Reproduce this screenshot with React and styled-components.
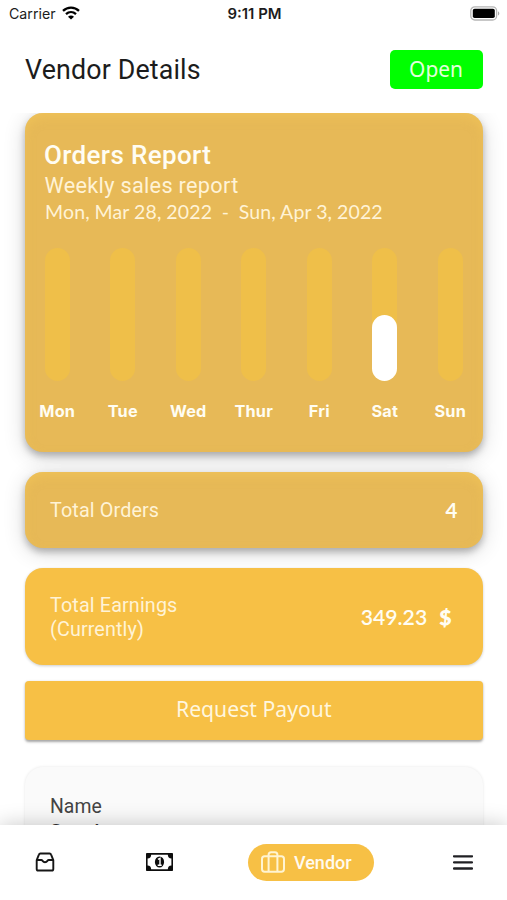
import React from 'react';
import styled, { createGlobalStyle } from 'styled-components';

const GlobalStyle = createGlobalStyle`
  * { box-sizing: border-box; }
  body { margin: 0; background: #fff; }
`;

const Screen = styled.div`
  width: 507px;
  height: 900px;
  display: flex;
  flex-direction: column;
  overflow: hidden;
  background: #fff;
  font-family: Roboto, sans-serif;
`;

const StatusBar = styled.div`
  flex: none;
  height: 28px;
  padding: 0 7px 0 9px;
  display: grid;
  grid-template-columns: 1fr auto 1fr;
  align-items: center;
  font-family: Inter, sans-serif;
  color: #1c1c1c;
`;

const Carrier = styled.div`
  display: flex;
  align-items: center;
  gap: 6px;
  font-size: 14.2px;
  line-height: 18px;

  svg { margin-top: -2px; }
`;

const Clock = styled.div`
  font-size: 14.9px;
  font-weight: 600;
`;

const Battery = styled.div`
  display: flex;
  justify-content: flex-end;
  svg { display: block; margin-top: -1px; }
`;

const Header = styled.header`
  flex: none;
  height: 85px;
  padding: 22px 24.5px 24.5px 25px;
  display: flex;
  justify-content: space-between;
  align-items: center;
`;

const Title = styled.h1`
  margin: 2px 0 0;
  font-size: 26.8px;
  line-height: 34px;
  font-weight: 400;
  letter-spacing: 0.15px;
  color: #1c1c1c;
`;

const OpenButton = styled.button`
  width: 93px;
  height: 39px;
  padding: 0 0 1px;
  border: 0;
  border-radius: 5px;
  background: #00ff00;
  color: #e2ffdc;
  font: 400 20.9px 'Noto Sans', sans-serif;
`;

const Content = styled.main`
  flex: 1;
  min-height: 0;
  overflow: hidden;
  padding: 0 24.5px 0 25px;
  display: flex;
  flex-direction: column;
`;

const Card = styled.section`
  flex: none;
  border-radius: 18px;
  color: #fff3d6;
  background: ${(p) => (p.$raised ? '#e7b957' : '#f7c045')};
  box-shadow: ${(p) =>
    p.$raised
      ? 'inset 0 5px 12px -2px rgba(250, 205, 90, 0.5), 0 4px 7px rgba(0, 0, 0, 0.25), 0 4px 22px rgba(0, 0, 0, 0.16)'
      : '0 1px 3px rgba(0, 0, 0, 0.2)'};
`;

const ReportCard = styled(Card)`
  height: 339px;
  padding-top: 27px;
`;

const ReportHeading = styled.h2`
  margin: 0 0 0 19px;
  height: 31px;
  font-size: 26px;
  line-height: 31px;
  font-weight: 500;
  letter-spacing: 0.35px;
  color: #fffdf3;
`;

const ReportSubtitle = styled.p`
  margin: 0 0 0 19.5px;
  font-size: 21.7px;
  line-height: 30px;
  font-weight: 400;
  letter-spacing: 0.3px;
`;

const ReportRange = styled.p`
  margin: -1px 0 0 20px;
  font: 400 19.5px/24px Lato, sans-serif;
  letter-spacing: 0.14px;
  word-spacing: -0.3px;
  white-space: pre;
`;

const Chart = styled.div`
  display: flex;
  margin: 24px -0.5px 0 -0.5px;
`;

const Day = styled.div`
  flex: 1;
  display: flex;
  flex-direction: column;
  align-items: center;
`;

const Track = styled.div`
  width: 25px;
  height: 133px;
  border-radius: 12.5px;
  background: #efbf49;
  display: flex;
  align-items: flex-end;
`;

const Fill = styled.div`
  width: 100%;
  height: ${(p) => p.$level}%;
  border-radius: 12.5px;
  background: #fff;
`;

const DayLabel = styled.span`
  margin-top: 18px;
  font: 700 16.3px/24px Inter, sans-serif;
  letter-spacing: 0.2px;
  color: #fffdf3;
`;

const StatCard = styled(Card)`
  height: ${(p) => p.$height}px;
  margin-top: 19.5px;
  padding: 1px ${(p) => p.$end}px 0 25px;
  display: flex;
  justify-content: space-between;
  align-items: center;
`;

const StatLabel = styled.div`
  margin-top: 2px;
  font-size: 19.8px;
  line-height: 24px;
  letter-spacing: 0.12px;
`;

const StatValue = styled.div`
  font: 700 ${(p) => p.$size}px/26px Lato, sans-serif;
  display: flex;
  gap: 12px;
  color: #fffdf3;
`;

const Amount = styled.span`
  font-weight: 600;
`;

const Currency = styled.span`
  font-weight: 800;
`;

const PayoutButton = styled.button`
  flex: none;
  height: 59px;
  margin-top: 15.5px;
  padding: 0 0 3px;
  border: 0;
  border-radius: 4px;
  background: #f7c045;
  box-shadow: 0 1.5px 2.5px rgba(0, 0, 0, 0.35);
  color: #fff6de;
  font: 400 21.2px 'Noto Sans', sans-serif;
`;

const DetailsCard = styled.section`
  flex: none;
  height: 120px;
  margin-top: 27px;
  padding: 28px 25px;
  border-radius: 18px;
  background: #fafafa;
  box-shadow: 0 0 3px rgba(0, 0, 0, 0.1);
`;

const FieldName = styled.div`
  font: 400 19.4px/24px Roboto, sans-serif;
  color: #444;
`;

const FieldValue = styled.div`
  margin-top: 2px;
  font: 500 19.6px/24px Roboto, sans-serif;
  letter-spacing: 1.6px;
  color: #333;
`;

const NavBar = styled.nav`
  flex: none;
  position: relative;
  height: 75.5px;
  padding: 0 34px 0 35px;
  display: grid;
  grid-template-columns: 111px 102px 126px 1fr;
  align-items: center;
  background: #fff;
  box-shadow: 0 0 20px rgba(0, 0, 0, 0.22);
  svg { display: block; }
`;

const NavItem = styled.div`
  display: flex;
  justify-content: ${(p) => (p.$end ? 'flex-end' : 'flex-start')};
`;

const ActiveNavItem = styled.div`
  height: 37px;
  border-radius: 18.5px;
  padding-left: 13px;
  display: flex;
  align-items: center;
  gap: 9px;
  background: #f7c045;
  color: #fffaf0;
  font: 500 18px Roboto, sans-serif;
`;

const WifiIcon = () => (
  <svg width="18" height="14" viewBox="0 0 18 14" fill="none" stroke="#000" strokeWidth="2.3">
    <path d="M1 4.9C5.5.6 12.5.6 17 4.9" />
    <path d="M4 8.1c2.9-2.7 7.1-2.7 10 0" />
    <path d="M9 13.6 6 10.7c1.7-1.5 4.3-1.5 6 0z" fill="#000" stroke="none" />
  </svg>
);

const BatteryIcon = () => (
  <svg width="30" height="15" viewBox="0 0 30 15">
    <rect x=".8" y=".8" width="25.8" height="13.2" rx="4" fill="#fff" stroke="#b5b5b5" strokeWidth="1.3" />
    <rect x="2.8" y="2.7" width="22" height="9.4" rx="1.8" fill="#000" />
    <path d="M28 5.2c1.8.7 1.8 3.7 0 4.4z" fill="#aaa" />
  </svg>
);

const TrayIcon = () => (
  <svg width="20" height="20" viewBox="0 0 20 20" fill="none" stroke="#161616" strokeWidth="1.9" strokeLinejoin="round" strokeLinecap="round">
    <path d="M1.7 8.2 3.9 2.6Q4.3 1.5 5.4 1.5h9.2q1.1 0 1.5 1.1l2.2 5.6v8.7q0 1.6-1.6 1.6H3.3q-1.6 0-1.6-1.6z" />
    <path d="M1.9 8h4.4c.8 0 .9.3 1.3.9 1.2 1.8 3.6 1.8 4.8 0 .4-.6.5-.9 1.3-.9h4.4" />
  </svg>
);

const CashIcon = () => (
  <svg width="27" height="18" viewBox="0 0 27 18">
    <rect width="27" height="18" rx=".8" fill="#0d0d0d" />
    <path d="M5.2 1.7h16.6a3.8 3.8 0 0 0 3.6 3.7v7.2a3.8 3.8 0 0 0-3.6 3.7H5.2a3.8 3.8 0 0 0-3.6-3.7V5.4a3.8 3.8 0 0 0 3.6-3.7z" fill="#fff" />
    <ellipse cx="13.5" cy="9" rx="4.6" ry="5.5" fill="#0d0d0d" />
    <path d="M11.9 6.4 14 5.3v7M11.7 12.3h4" fill="none" stroke="#fff" strokeWidth="1.4" />
  </svg>
);

const SuitcaseIcon = () => (
  <svg width="24" height="22" viewBox="0 0 24 22" fill="none" stroke="#fff4d2" strokeWidth="2" strokeLinejoin="round">
    <rect x="1" y="5.3" width="22" height="15.4" rx="2.6" />
    <path d="M7.6 20.5V3.8q0-2.5 2.5-2.5h3.8q2.5 0 2.5 2.5v16.7" />
  </svg>
);

const MenuIcon = () => (
  <svg width="20" height="16" viewBox="0 0 20 16" stroke="#202024" strokeWidth="2.3" strokeLinecap="round">
    <path d="M1 2.3h18M1 8.4h18M1 14.5h18" />
  </svg>
);

const days = [
  ['Mon', 0],
  ['Tue', 0],
  ['Wed', 0],
  ['Thur', 0],
  ['Fri', 0],
  ['Sat', 50],
  ['Sun', 0],
];

export default function App() {
  return (
    <Screen>
      <GlobalStyle />
      <StatusBar>
        <Carrier>Carrier <WifiIcon /></Carrier>
        <Clock>9:11 PM</Clock>
        <Battery><BatteryIcon /></Battery>
      </StatusBar>
      <Header>
        <Title>Vendor Details</Title>
        <OpenButton>Open</OpenButton>
      </Header>
      <Content>
        <ReportCard $raised>
          <ReportHeading>Orders Report</ReportHeading>
          <ReportSubtitle>Weekly sales report</ReportSubtitle>
          <ReportRange>{'Mon, Mar 28, 2022  -  Sun, Apr 3, 2022'}</ReportRange>
          <Chart>
            {days.map(([name, level]) => (
              <Day key={name}>
                <Track>{level > 0 && <Fill $level={level} />}</Track>
                <DayLabel>{name}</DayLabel>
              </Day>
            ))}
          </Chart>
        </ReportCard>
        <StatCard $raised $height={76.5} $end={25}>
          <StatLabel>Total Orders</StatLabel>
          <StatValue $size={20.5}>4</StatValue>
        </StatCard>
        <StatCard $height={97.5} $end={31}>
          <StatLabel>Total Earnings<br />(Currently)</StatLabel>
          <StatValue $size={21.2}><Amount>349.23</Amount><Currency>$</Currency></StatValue>
        </StatCard>
        <PayoutButton>Request Payout</PayoutButton>
        <DetailsCard>
          <FieldName>Name</FieldName>
          <FieldValue>Sand</FieldValue>
        </DetailsCard>
      </Content>
      <NavBar>
        <NavItem><TrayIcon /></NavItem>
        <NavItem><CashIcon /></NavItem>
        <ActiveNavItem><SuitcaseIcon />Vendor</ActiveNavItem>
        <NavItem $end><MenuIcon /></NavItem>
      </NavBar>
    </Screen>
  );
}
